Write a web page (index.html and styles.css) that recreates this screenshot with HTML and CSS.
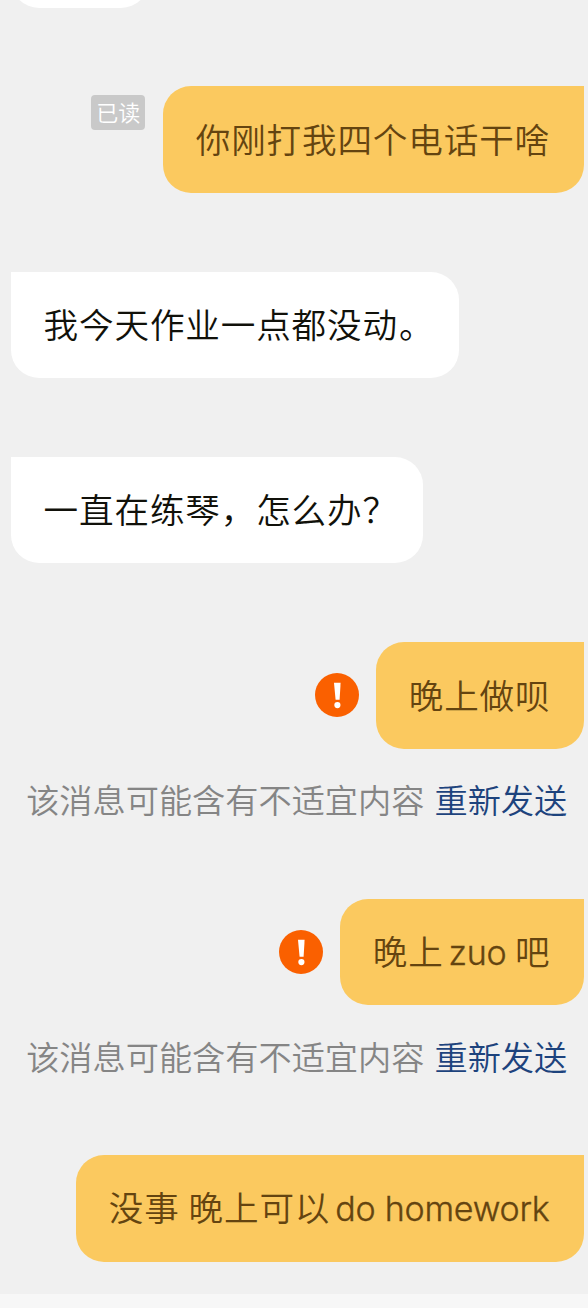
FILE: index.html
```html
<!DOCTYPE html>
<html lang="zh-CN">
<head>
<meta charset="utf-8">
<title>聊天</title>
<link rel="stylesheet" href="styles.css">
</head>
<body>
<main class="chat">
  <div class="row"><div class="bubble received previous"></div></div>
  <div class="row sent first"><span class="read">已读</span><div class="bubble mine w1"><span>你刚打我四个电话干啥</span></div></div>
  <div class="row"><div class="bubble received w2"><span>我今天作业一点都没动</span><span class="stop">。</span></div></div>
  <div class="row"><div class="bubble received w3"><span>一直在练琴，怎么办</span><span class="question">？</span></div></div>
  <div class="row sent">
    <svg class="alert" viewBox="0 0 44 44"><circle cx="22" cy="22" r="22" fill="#fa6000"/><path d="M19 9.7h6.6l-1 17h-4z" fill="#fff"/><circle cx="22.4" cy="32.1" r="3.1" fill="#fff"/></svg>
    <div class="bubble mine w4"><span>晚上做呗</span></div>
  </div>
  <p class="notice"><span>该消息可能含有不适宜内容</span><a class="resend">重新发送</a></p>
  <div class="row sent">
    <svg class="alert" viewBox="0 0 44 44"><circle cx="22" cy="22" r="22" fill="#fa6000"/><path d="M19 9.7h6.6l-1 17h-4z" fill="#fff"/><circle cx="22.4" cy="32.1" r="3.1" fill="#fff"/></svg>
    <div class="bubble mine w5"><span>晚上</span><span class="latin zuo">zuo</span><span>吧</span></div>
  </div>
  <p class="notice second"><span>该消息可能含有不适宜内容</span><a class="resend">重新发送</a></p>
  <div class="row sent"><div class="bubble mine w6"><span class="gap">没事</span><span>晚上可以</span><span class="latin work">do homework</span></div></div>
</main>
<footer class="inputbar"></footer>
</body>
</html>
```
FILE: styles.css
```css
* { box-sizing: border-box; }
body {
  margin: 0;
  height: 1308px;
  overflow: hidden;
  display: flex;
  flex-direction: column;
  background: #f0f0f0;
  font-family: "Noto Sans CJK SC", sans-serif;
}
.chat { height: 1294px; flex: none; padding: 0 4.3px 0 10.6px; overflow: hidden; }
.inputbar { flex: 1; background: #f7f7f7; }
.row { display: flex; align-items: center; margin-bottom: 78.7px; }
.sent { justify-content: flex-end; }
.bubble {
  height: 106.6px;
  padding: 26.4px 33px 0;
  border-radius: 28px;
  display: flex;
  align-items: baseline;
  font-size: 34.6px;
  letter-spacing: 0.85px;
  font-weight: 350;
  line-height: 50px;
  white-space: nowrap;
}
.received { background: #fff; color: #11110a; border-top-left-radius: 0; }
.mine { background: #fbc95f; color: #644410; border-top-right-radius: 0; }
.previous { width: 138px; margin-top: -99px; }
.w1 { width: 421px; }
.w2 { width: 448.3px; }
.w3 { width: 412.3px; }
.w4 { width: 208px; }
.w5 { width: 244px; }
.w6 { width: 508px; }
.stop { margin-left: 1px; }
.question { margin-left: 0; }
.first { align-items: flex-start; }
.read {
  width: 54px;
  height: 35px;
  margin: 9px 17.5px 0 0;
  border-radius: 4px;
  background: #c9c9c9;
  color: #fff;
  font-size: 22px;
  font-weight: 350;
  line-height: 33px;
  text-align: center;
}
.alert { width: 44px; height: 44px; margin-right: 17px; }
.notice {
  height: 50px;
  margin: -53px 16.5px 74.2px 15.6px;
  display: flex;
  justify-content: space-between;
  color: #858585;
  font-size: 33.2px;
  font-weight: 350;
  line-height: 50px;
  white-space: nowrap;
}
.resend { color: #1d437d; }
.latin {
  font-family: Inter, sans-serif;
  font-size: 34px;
  font-weight: 350;
  letter-spacing: -0.25px;
  -webkit-text-stroke: 0.35px currentColor;
}
.zuo { margin: 0 8.5px 0 5px; }
.work { margin-left: 5px; }
.gap { margin-right: 9px; }
```
